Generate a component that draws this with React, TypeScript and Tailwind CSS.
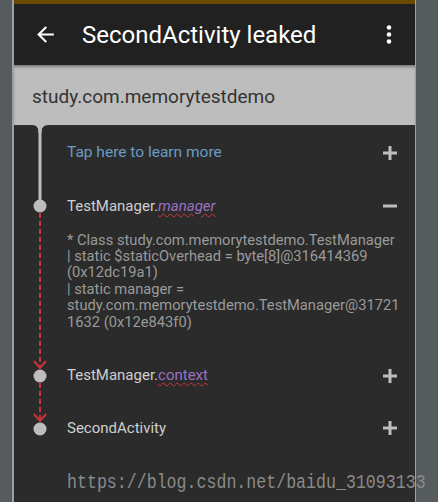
import React from "react";

function Plus() {
  return (
    <svg width="14" height="14" viewBox="0 0 14 14" className="shrink-0">
      <rect x="5.5" y="0" width="3" height="14" fill="#bdbdbd" />
      <rect x="0" y="5.5" width="14" height="3" fill="#bdbdbd" />
    </svg>
  );
}

function Minus() {
  return (
    <svg width="14" height="14" viewBox="0 0 14 14" className="shrink-0">
      <rect x="0" y="5.5" width="14" height="3" fill="#bdbdbd" />
    </svg>
  );
}

function Timeline() {
  const red = "#c8323c";
  const gray = "#bdbdbd";
  return (
    <svg width="53" height="377" viewBox="0 0 53 377" className="shrink-0">
      <path d="M18 0 L35 0 C29 0 27.5 3 27.5 8 L24.5 8 C24.5 3 23 0 18 0 Z" fill={gray} />
      <line x1="26" y1="0" x2="26" y2="80" stroke={gray} strokeWidth="3" />
      <circle cx="26" cy="81" r="6.5" fill={gray} />
      <line x1="26" y1="88" x2="26" y2="243" stroke={red} strokeWidth="2" strokeDasharray="5 3" />
      <polyline points="20,236 26,243 32,236" fill="none" stroke={red} strokeWidth="2" />
      <circle cx="26" cy="251" r="6.5" fill={gray} />
      <line x1="26" y1="258" x2="26" y2="296" stroke={red} strokeWidth="2" strokeDasharray="5 3" />
      <polyline points="20,289 26,296 32,289" fill="none" stroke={red} strokeWidth="2" />
      <circle cx="26" cy="304" r="6.5" fill={gray} />
    </svg>
  );
}

export default function App() {
  return (
    <div className="w-[438px] h-[502px] flex bg-[#565b5e] overflow-hidden font-[family-name:Roboto,'Noto_Sans',sans-serif]">
      <div className="ml-[12px] w-[404px] h-full flex flex-col border-l-2 border-r border-[#9aa0a3] bg-[#2b2b2b]">
        <div className="h-[4px] bg-[#6a4a00] shrink-0" />
        <div className="h-[61px] bg-[#212121] flex items-center shrink-0">
          <svg width="25" height="25" viewBox="0 0 24 24" className="ml-[19px] shrink-0">
            <path d="M20 11H7.83l5.59-5.59L12 4l-8 8 8 8 1.41-1.41L7.83 13H20v-2z" fill="#ffffff" />
          </svg>
          <div className="ml-[24px] text-[24px] leading-none text-white flex-1 pt-[1px]">SecondActivity leaked</div>
          <svg width="8" height="24" viewBox="0 0 8 24" className="mr-[22px] shrink-0">
            <circle cx="4" cy="4.5" r="2.3" fill="#ffffff" />
            <circle cx="4" cy="11.5" r="2.3" fill="#ffffff" />
            <circle cx="4" cy="18.5" r="2.3" fill="#ffffff" />
          </svg>
        </div>
        <div className="h-[60px] bg-[#bdbdbd] shrink-0 flex items-center pl-[18px] pt-[5px] text-[19px] text-[#333333] shadow-[inset_0_3px_3px_-1px_rgba(0,0,0,0.35)]">
          study.com.memorytestdemo
        </div>
        <div className="flex flex-1 min-h-0">
          <Timeline />
          <div className="flex-1 flex flex-col min-w-0">
            <div className="h-[56px] flex items-center justify-between pr-[18px] pt-[1px] text-[15.5px] text-[#6a9bc4]">
              <span>Tap here to learn more</span>
              <Plus />
            </div>
            <div className="h-[50px] flex items-center justify-between pr-[18px] pt-[4px] text-[15px] text-[#cfcfcf]">
              <span>
                TestManager.
                <span className="italic text-[#9a6fc0] underline decoration-wavy decoration-[#d0343c] decoration-1 underline-offset-2">manager</span>
              </span>
              <Minus />
            </div>
            <div className="pt-[3px] text-[14.7px] leading-[16.4px] text-[#9a9a9a] whitespace-nowrap">
              <div>* Class study.com.memorytestdemo.TestManager</div>
              <div>| static $staticOverhead = byte[8]@316414369</div>
              <div>(0x12dc19a1)</div>
              <div>| static manager =</div>
              <div>study.com.memorytestdemo.TestManager@31721</div>
              <div>1632 (0x12e843f0)</div>
            </div>
            <div className="h-[19px] shrink-0" />
            <div className="h-[50px] flex items-center justify-between pr-[18px] pt-[4px] text-[15px] text-[#cfcfcf]">
              <span>
                TestManager.
                <span className="text-[#9a6fc0] underline decoration-wavy decoration-[#d0343c] decoration-1 underline-offset-2">context</span>
              </span>
              <Plus />
            </div>
            <div className="h-[56px] flex items-center justify-between pr-[18px] pt-[6px] text-[15px] text-[#cfcfcf]">
              <span>SecondActivity</span>
              <Plus />
            </div>
            <div className="h-[50px] pt-[12px] flex items-center whitespace-nowrap relative z-10">
              <span className="inline-block origin-left scale-x-[0.83] text-[20px] text-[#8a8a8a] font-[family-name:'Liberation_Mono','DejaVu_Sans_Mono',monospace]">
                https://blog.csdn.net/baidu_31093133
              </span>
            </div>
          </div>
        </div>
      </div>
    </div>
  );
}
